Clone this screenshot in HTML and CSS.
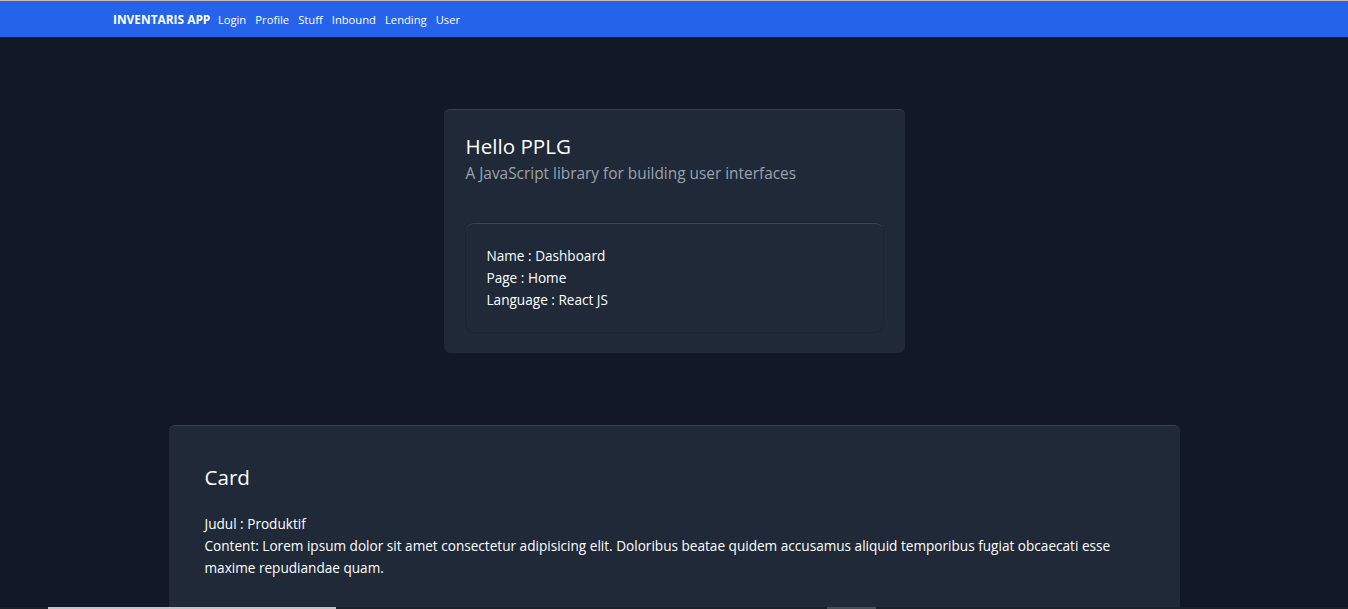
FILE: index.html
```html
<!DOCTYPE html>
<html lang="en">
<head>
<meta charset="utf-8">
<title>Inventaris App</title>
<link rel="stylesheet" href="styles.css">
</head>
<body>
<div class="topline"></div>
<nav class="navbar">
  <div class="nav-inner">
    <span class="brand">INVENTARIS APP</span>
    <a class="nav-link" href="#">Login</a>
    <a class="nav-link" href="#">Profile</a>
    <a class="nav-link" href="#">Stuff</a>
    <a class="nav-link" href="#">Inbound</a>
    <a class="nav-link" href="#">Lending</a>
    <a class="nav-link" href="#">User</a>
  </div>
</nav>
<main class="main">
  <section class="hello-card">
    <h1 class="hello-title">Hello PPLG</h1>
    <p class="hello-sub">A JavaScript library for building user interfaces</p>
    <div class="info-card">
      <p class="info-line">Name : Dashboard</p>
      <p class="info-line">Page : Home</p>
      <p class="info-line">Language : React JS</p>
    </div>
  </section>
  <section class="wide-card">
    <h2 class="wide-title">Card</h2>
    <p class="info-line">Judul : Produktif</p>
    <p class="info-line">Content: Lorem ipsum dolor sit amet consectetur adipisicing elit. Doloribus beatae quidem accusamus aliquid temporibus fugiat obcaecati esse maxime repudiandae quam.</p>
  </section>
</main>
<div class="scrollbar">
  <div class="thumb-a"></div>
  <div class="thumb-b"></div>
</div>
</body>
</html>
```

FILE: styles.css
```css
* { box-sizing: border-box; }
html, body { margin: 0; padding: 0; }
body {
  background: #111827;
  color: #ffffff;
  font-family: "Open Sans", "Noto Sans", sans-serif;
  overflow: hidden;
  height: 609px;
}
.topline { height: 1px; background: #cdb9b2; }
.navbar {
  background: #2563eb;
  height: 36px;
}
.nav-inner {
  display: flex;
  align-items: center;
  height: 100%;
  padding-left: 113px;
  gap: 9.1px;
  font-size: 11.2px;
}
.brand { font-weight: 700; font-size: 11.9px; margin-right: -1.5px; }
.nav-link { color: #ffffff; text-decoration: none; }
.main {
  display: flex;
  flex-direction: column;
  align-items: center;
  padding-top: 72px;
  gap: 72px;
}
.hello-card {
  width: 461px;
  background: #1f2937;
  border-radius: 6px;
  border-top: 1px solid #374151;
  padding: 21px 22px 21px;
}
.hello-title {
  margin: 0;
  font-size: 20.6px;
  font-weight: 400;
  line-height: 30px;
}
.hello-sub {
  margin: 0;
  font-size: 15.4px;
  line-height: 24px;
  padding-top: 1px;
  color: #9ca3af;
}
.info-card {
  margin-top: 37px;
  border-radius: 8px;
  border-top: 1px solid #3b4553;
  box-shadow: 0 0 0 1px #1b2431;
  background: #1f2937;
  padding: 21px 21px 21px;
}
.info-line {
  margin: 0;
  font-size: 13.6px;
  line-height: 22px;
}
.wide-card {
  width: 1011px;
  background: #1f2937;
  border-radius: 6px;
  border-top: 1px solid #374151;
  padding: 36px 36px 40px;
}
.wide-title {
  margin: 0 0 21px;
  font-size: 20.6px;
  font-weight: 400;
  line-height: 30px;
}
.scrollbar {
  position: fixed;
  left: 0;
  right: 0;
  bottom: 0;
  height: 2px;
  background: #1c1f25;
}
.thumb-a {
  position: absolute;
  left: 48px;
  width: 288px;
  top: 0;
  height: 2px;
  background: #c4c4c4;
}
.thumb-b {
  position: absolute;
  left: 827px;
  width: 49px;
  top: 0;
  height: 2px;
  background: #4a4d52;
}
```
